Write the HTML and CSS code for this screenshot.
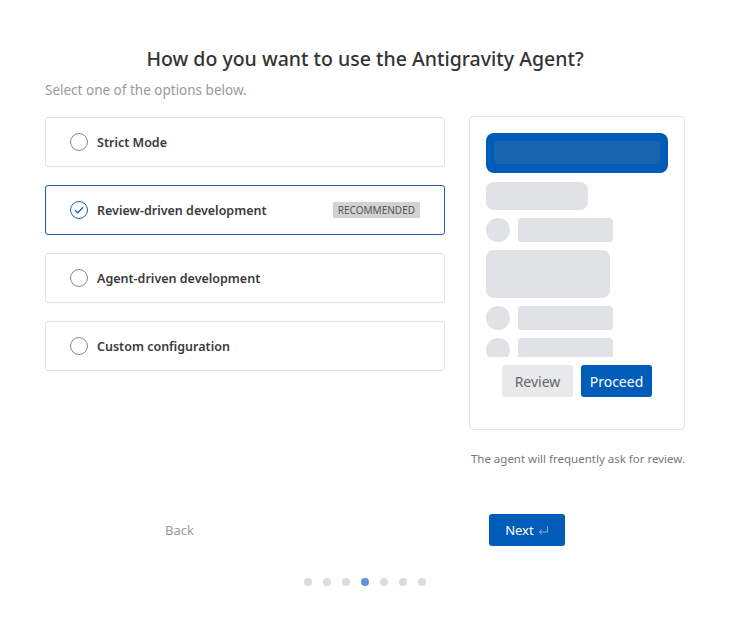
FILE: index.html
```html
<!DOCTYPE html>
<html lang="en">
<head>
  <meta charset="UTF-8" />
  <meta name="viewport" content="width=device-width, initial-scale=1.0"/>
  <title>Agent setup</title>
  <link rel="stylesheet" href="styles.css">
</head>
<body>

  <div class="wizard">
    <h1>How do you want to use the Antigravity Agent?</h1>
    <p class="subtitle">Select one of the options below.</p>

    <div class="content">
      <div class="options">
        <div class="option">
          <span class="radio"></span>
          <span class="label">Strict Mode</span>
        </div>
        <div class="option selected">
          <span class="radio">
            <svg width="10" height="8" viewBox="0 0 10 8"><path d="M1 4.2 L3.8 6.8 L9 1.2" fill="none" stroke="#1a62b4" stroke-width="1.3"/></svg>
          </span>
          <span class="label">Review-driven development</span>
          <span class="badge">RECOMMENDED</span>
        </div>
        <div class="option">
          <span class="radio"></span>
          <span class="label">Agent-driven development</span>
        </div>
        <div class="option">
          <span class="radio"></span>
          <span class="label">Custom configuration</span>
        </div>
      </div>

      <div class="preview-col">
        <div class="preview">
          <div class="chat">
            <div class="prompt"><div class="prompt-inner"></div></div>
            <div class="bubble short"></div>
            <div class="row"><span class="avatar"></span><span class="line"></span></div>
            <div class="bubble tall"></div>
            <div class="row"><span class="avatar"></span><span class="line"></span></div>
            <div class="row"><span class="avatar"></span><span class="line"></span></div>
          </div>
          <div class="actions">
            <button class="btn-review">Review</button>
            <button class="btn-proceed">Proceed</button>
          </div>
        </div>
        <p class="caption">The agent will frequently ask for review.</p>
      </div>
    </div>

    <div class="footer">
      <button class="back-btn">Back</button>
      <button class="next-btn">Next
        <svg width="11" height="9" viewBox="0 0 11 9"><path d="M9.5 0.5 V6 H1.5 M3.8 3.6 L1.3 6 L3.8 8.4" fill="none" stroke="#8fb8e6" stroke-width="1"/></svg>
      </button>
    </div>

    <div class="dots">
      <span></span><span></span><span></span><span class="active"></span><span></span><span></span><span></span>
    </div>
  </div>

</body>
</html>
```

FILE: styles.css
```css
* {
  box-sizing: border-box;
  margin: 0;
  padding: 0;
  font-family: 'Noto Sans', 'Open Sans', sans-serif;
}

body {
  background: #fff;
  color: #333;
}

.wizard {
  width: 640px;
  margin-left: 45px;
  padding-top: 44px;
}

h1 {
  text-align: center;
  font-size: 19.5px;
  font-weight: 500;
  color: #333;
  line-height: 30px;
}

.subtitle {
  margin-top: 6px;
  font-size: 13.5px;
  color: #9a9a9a;
  line-height: 20px;
}

.content {
  display: flex;
  justify-content: space-between;
  margin-top: 16px;
}

.options {
  width: 400px;
  display: flex;
  flex-direction: column;
  gap: 18px;
  padding-top: 1px;
}

.option {
  height: 50px;
  border: 1px solid #e2e2e2;
  border-radius: 3px;
  display: flex;
  align-items: center;
  padding-left: 24px;
  padding-right: 24px;
}

.option.selected {
  border-color: #1d5ea8;
}

.radio {
  width: 18px;
  height: 18px;
  border: 1px solid #888;
  border-radius: 50%;
  display: flex;
  align-items: center;
  justify-content: center;
  margin-right: 9px;
}

.selected .radio {
  border-color: #1a62b4;
}

.label {
  font-size: 12.5px;
  font-weight: 600;
  color: #3a3a3a;
  flex: 1;
}

.badge {
  background: #d2d2d2;
  color: #555;
  font-size: 10px;
  padding: 1px 5px;
  border-radius: 1px;
  line-height: 14px;
}

.preview-col {
  width: 216px;
}

.preview {
  height: 314px;
  border: 1px solid #e5e5e5;
  border-radius: 4px;
  padding: 16px 16px 0 16px;
}

.chat {
  height: 224px;
  overflow: hidden;
  display: flex;
  flex-direction: column;
  gap: 8px;
}

.prompt {
  flex-shrink: 0;
  height: 40px;
  width: 182px;
  background: #005cb9;
  border-radius: 8px;
  padding: 8px;
}

.prompt-inner {
  height: 23px;
  background: #1864ae;
  border-radius: 3px;
}

.bubble {
  flex-shrink: 0;
  background: #e1e2e5;
  border-radius: 8px;
}

.bubble.short {
  width: 102px;
  height: 28px;
  margin-top: 1px;
}

.bubble.tall {
  width: 124px;
  height: 48px;
}

.row {
  flex-shrink: 0;
  display: flex;
  gap: 8px;
  height: 24px;
}

.avatar {
  width: 24px;
  height: 24px;
  border-radius: 50%;
  background: #e1e2e5;
}

.line {
  width: 95px;
  height: 24px;
  border-radius: 4px;
  background: #e1e2e5;
}

.actions {
  display: flex;
  justify-content: center;
  gap: 8px;
  margin-top: 8px;
}

.actions button {
  width: 71px;
  height: 32px;
  border: none;
  border-radius: 3px;
  font-size: 14px;
}

.btn-review {
  background: #e8e9eb;
  color: #666;
}

.btn-proceed {
  background: #005cb9;
  color: #fff;
}

.caption {
  margin-top: 21px;
  text-align: right;
  font-size: 11.5px;
  color: #777;
}

.footer {
  display: flex;
  align-items: center;
  margin-top: 48px;
}

.back-btn {
  background: none;
  border: none;
  color: #9a9a9a;
  font-size: 13px;
  margin-left: 120px;
}

.next-btn {
  margin-left: 295px;
  width: 76px;
  height: 32px;
  background: #005cb9;
  color: #fff;
  border: none;
  border-radius: 3px;
  font-size: 13px;
  display: flex;
  align-items: center;
  justify-content: center;
  gap: 4px;
}

.dots {
  display: flex;
  justify-content: center;
  gap: 11px;
  margin-top: 32px;
  margin-left: 0;
}

.dots span {
  width: 8px;
  height: 8px;
  border-radius: 50%;
  background: #dcdcdc;
}

.dots span.active {
  background: #5b94d4;
}
```
